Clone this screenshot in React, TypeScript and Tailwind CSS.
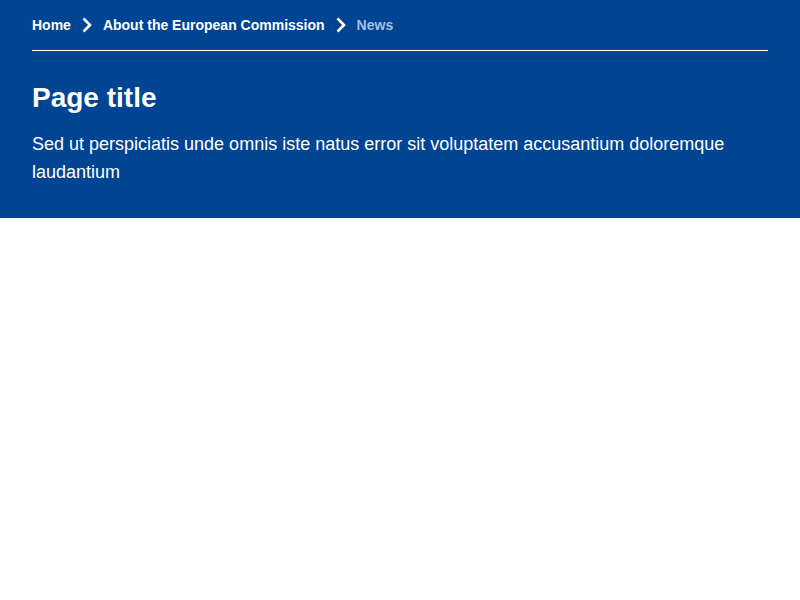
import React from "react";

function Chevron() {
  return (
    <svg width="12" height="16" viewBox="0 0 12 16" className="mx-[10px] shrink-0" aria-hidden="true">
      <path d="M2.5 1.5 L9 8 L2.5 14.5" fill="none" stroke="white" strokeWidth="2.6" strokeLinecap="butt" strokeLinejoin="miter" />
    </svg>
  );
}

export default function App() {
  return (
    <div className="min-h-[600px] bg-white" style={{ fontFamily: '"Liberation Sans", Arial, sans-serif' }}>
      <div className="bg-[#004494] px-8 pt-4 pb-8 text-white">
        <nav className="flex items-center border-b border-white pb-[16px] text-[14px] font-bold leading-[18px]">
          <span>Home</span>
          <Chevron />
          <span>About the European Commission</span>
          <Chevron />
          <span className="text-[#aabfe0]">News</span>
        </nav>
        <h1 className="mt-[30px] text-[28px] font-bold leading-[34px]">Page title</h1>
        <p className="mt-[15px] text-[18px] leading-[28px]">
          Sed ut perspiciatis unde omnis iste natus error sit voluptatem accusantium doloremque laudantium
        </p>
      </div>
    </div>
  );
}
